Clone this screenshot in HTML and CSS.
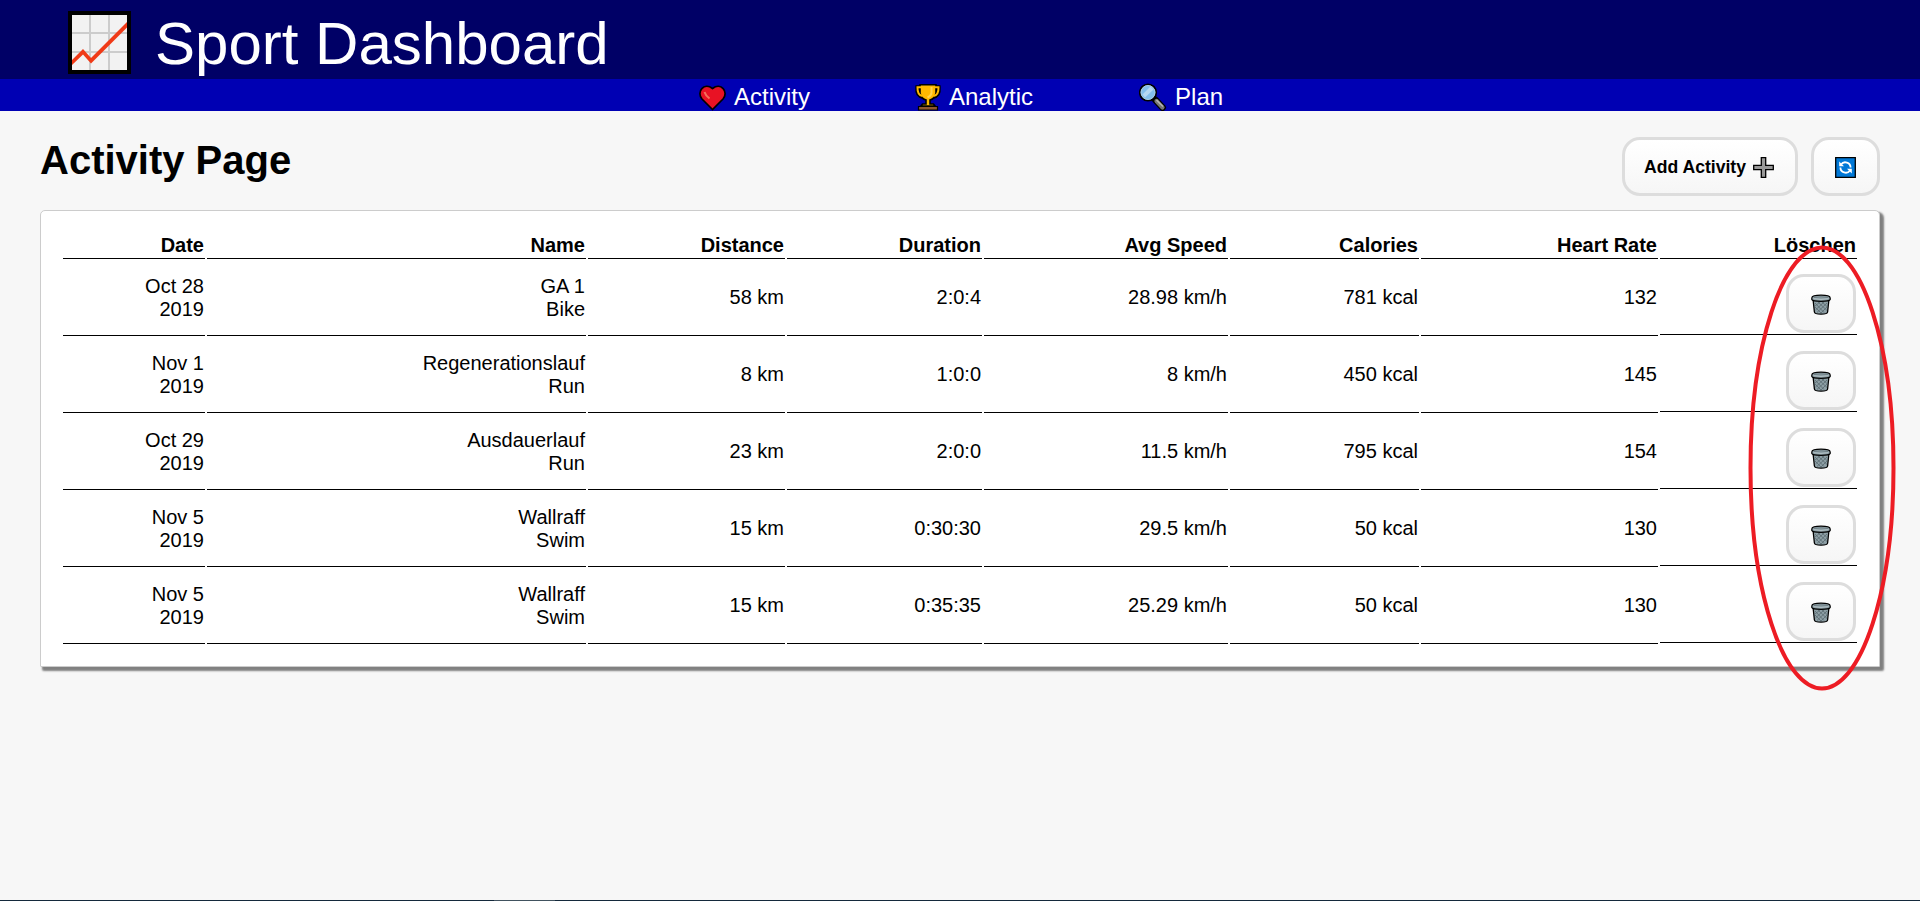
FILE: index.html
```html
<!DOCTYPE html>
<html lang="en">
<head>
<meta charset="utf-8">
<title>Sport Dashboard</title>
<link rel="stylesheet" href="styles.css">
</head>
<body>
<svg class="defs" width="0" height="0">
  <symbol id="trash" viewBox="0 0 20 21">
    <path d="M2 5 3.400 18Q3.600 20.200 10 20.200T16.600 18L18 5Z" fill="#8d9fa5" stroke="#000" stroke-width="1.300"/>
    <path d="M4 9 13 18.500M7 8 16 16.500M11 8 16.500 13M4 13 10 19M16 9 6 18.500M13 8 4.500 16M9 8 4 12M16 13 10 19" stroke="#596a70" stroke-width=".8" fill="none"/>
    <path d="M.800 4Q.800 1.200 10 1.200T19.200 4V5.500Q18.500 7.300 10 7.300T.800 5.500Z" fill="#8d9fa5" stroke="#000" stroke-width="1.200"/>
    <path d="M2.500 4.500Q10 6.500 17.500 4.500" stroke="#b3c1c6" stroke-width="1" fill="none"/>
    <path d="M3 3.600Q10 2 17 3.600" stroke="#66767c" stroke-width=".8" fill="none"/>
  </symbol>
</svg>
<header class="header">
  <svg class="logo" width="63" height="63" viewBox="0 0 63 63">
    <path d="M0 0H63V63H0Z"/>
    <path d="M4 4H59V59H4Z" fill="#f2f2f2"/>
    <path d="M22 4V59M41 4V59M4 22H59M4 41H59" stroke="#ccc" stroke-width="2"/>
    <path d="M4 49V54L15 43.500 23 52.500 59 16.500V11L23 47 15 38Z" fill="#f03a17"/>
  </svg>
  <span class="brand">Sport Dashboard</span>
</header>
<nav class="nav">
  <a class="nav-item"><svg width="28" height="28" viewBox="0 0 28 28">
    <path d="M13.500 26.500 3 16C-3 9 5-1 13.500 5.500 22-1 30 9 24 16Z" fill="#e81224" stroke="#000" stroke-width="1.700"/>
    <path d="M5.500 9Q6.500 12.500 10.500 15.500" stroke="#f4705a" stroke-width="2" fill="none"/>
  </svg><span>Activity</span></a>
  <a class="nav-item"><svg width="28" height="28" viewBox="0 0 28 28">
    <path d="M7 4.500H3.500C3 10 5 13 9 13.500M21 4.500H24.500C25 10 23 13 19 13.500" fill="none" stroke="#000" stroke-width="4.500"/>
    <path d="M6 1.800H22V10Q21 16 16 17V21H19.500L21 23H7L8.500 21H12V17Q7 16 6 10Z" fill="#ffb900" stroke="#000" stroke-width="1.600"/>
    <path d="M7 4.200H3.500C3.300 9.500 5 12.300 8.500 13M21 4.200H24.500C24.700 9.500 23 12.300 19.500 13" fill="none" stroke="#ffb900" stroke-width="2"/>
    <path d="M17.500 4V10Q17 13 13.500 14.500" fill="none" stroke="#ffd24d" stroke-width="2"/>
    <path d="M4.500 23.500H23.500V27H4.500Z" fill="#8e562e" stroke="#000" stroke-width="1.200"/>
  </svg><span>Analytic</span></a>
  <a class="nav-item"><svg width="28" height="28" viewBox="0 0 28 28">
    <path d="M16.500 17 23.500 24.500" stroke="#000" stroke-width="6.800" stroke-linecap="round"/>
    <path d="M13.500 14 18 18.500" stroke="#000" stroke-width="3"/>
    <path d="M17.500 18 23.500 24.500" stroke="#767676" stroke-width="4.200" stroke-linecap="round"/>
    <path d="M17.500 17 24 23.500" stroke="#b5b5b5" stroke-width="1.500"/>
    <circle cx="9" cy="9.500" r="8.200" fill="#83beec" stroke="#000" stroke-width="1.800"/>
    <circle cx="9" cy="9.500" r="7" fill="none" stroke="#a9cbe3" stroke-width="1"/>
    <path d="M3.500 11.500 11.500 3.500 14.500 6.500 6 14.500Z" fill="#b5d8f3"/>
  </svg><span>Plan</span></a>
</nav>
<main class="main">
  <div class="toolbar">
    <h1>Activity Page</h1>
    <div class="actions">
      <button class="btn btn-add"><span>Add Activity</span><svg width="21" height="21" viewBox="0 0 21 21"><path d="M8.300.700H12.700V8.300H20.300V12.700H12.700V20.300H8.300V12.700H.700V8.300H8.300Z" fill="#999" stroke="#000" stroke-width="1.300"/></svg></button>
      <button class="btn btn-refresh"><svg width="21" height="21" viewBox="0 0 21 21"><path d="M.700.700H20.300V20.300H.700Z" fill="#0078d7" stroke="#000" stroke-width="1.300"/><path d="M6 7.500A5.300 5.300 0 0 1 15.600 10.500M15 13.500A5.300 5.300 0 0 1 5.400 10.500" fill="none" stroke="#fff" stroke-width="1.800"/><path d="M4.200 4.500V9.300H9ZM16.800 16.500V11.700H12Z" fill="#fff"/></svg></button>
    </div>
  </div>
  <section class="card">
    <table>
      <colgroup><col class="c-date"><col class="c-name"><col class="c-dist"><col class="c-dur"><col class="c-speed"><col class="c-cal"><col class="c-heart"><col class="c-del"></colgroup>
      <thead><tr><th>Date</th><th>Name</th><th>Distance</th><th>Duration</th><th>Avg Speed</th><th>Calories</th><th>Heart Rate</th><th>Löschen</th></tr></thead>
      <tbody>
        <tr><td>Oct 28<br>2019</td><td>GA 1<br>Bike</td><td>58 km</td><td>2:0:4</td><td>28.98 km/h</td><td>781 kcal</td><td>132</td><td class="del"><div><button class="btn"><svg width="20" height="21"><use href="#trash"/></svg></button></div></td></tr>
        <tr><td>Nov 1<br>2019</td><td>Regenerationslauf<br>Run</td><td>8 km</td><td>1:0:0</td><td>8 km/h</td><td>450 kcal</td><td>145</td><td class="del"><div><button class="btn"><svg width="20" height="21"><use href="#trash"/></svg></button></div></td></tr>
        <tr><td>Oct 29<br>2019</td><td>Ausdauerlauf<br>Run</td><td>23 km</td><td>2:0:0</td><td>11.5 km/h</td><td>795 kcal</td><td>154</td><td class="del"><div><button class="btn"><svg width="20" height="21"><use href="#trash"/></svg></button></div></td></tr>
        <tr><td>Nov 5<br>2019</td><td>Wallraff<br>Swim</td><td>15 km</td><td>0:30:30</td><td>29.5 km/h</td><td>50 kcal</td><td>130</td><td class="del"><div><button class="btn"><svg width="20" height="21"><use href="#trash"/></svg></button></div></td></tr>
        <tr><td>Nov 5<br>2019</td><td>Wallraff<br>Swim</td><td>15 km</td><td>0:35:35</td><td>25.29 km/h</td><td>50 kcal</td><td>130</td><td class="del"><div><button class="btn"><svg width="20" height="21"><use href="#trash"/></svg></button></div></td></tr>
      </tbody>
    </table>
    <svg class="highlight" width="148" height="446" viewBox="0 0 148 446"><ellipse cx="74" cy="223" rx="71.500" ry="220.500" fill="none" stroke="#ed1c24" stroke-width="4"/></svg>
  </section>
</main>
<footer class="edge"></footer>
</body>
</html>
```
FILE: styles.css
```css
* { box-sizing: border-box; }
body {
  margin: 0;
  height: 901px;
  display: flex;
  flex-direction: column;
  overflow: hidden;
  background: #f7f7f7;
  color: #000;
  font: 20px/23px "Liberation Sans", Arial, sans-serif;
}
svg { display: block; flex: none; }
.defs { position: absolute; }
.header {
  height: 79px;
  flex: none;
  display: flex;
  align-items: flex-start;
  gap: 24px;
  padding: 11px 0 0 68px;
  background: #000066;
  color: #fff;
}
.brand { font-size: 60px; line-height: 68px; margin-top: -1px; }
.nav {
  height: 32px;
  flex: none;
  display: flex;
  gap: 105px;
  padding: 4px 0 0 699px;
  background: #0000b3;
  color: #fff;
  font-size: 24px;
  line-height: 27px;
}
.nav-item { display: flex; gap: 7px; }
.nav-item:nth-child(2) { margin-left: -1px; }
.nav-item:nth-child(3) { gap: 8px; margin-left: 1px; }
.main { flex: 1; padding: 26px 40px 0; }
.toolbar { display: flex; justify-content: space-between; height: 73px; }
h1 { margin: 0; font-size: 40px; line-height: 46px; }
.actions { display: flex; gap: 13px; }
.btn {
  display: flex;
  align-items: center;
  justify-content: center;
  width: 70px;
  height: 59px;
  padding: 2px 0 0;
  border: 3px solid #ddd;
  border-radius: 18px;
  background: linear-gradient(#fff, #f6f6f6);
  color: #000;
  font: bold 17.6px "Liberation Sans", Arial, sans-serif;
}
.btn-add { width: 176px; gap: 7px; padding-right: 2px; }
.btn-refresh { width: 69px; }
.card {
  position: relative;
  height: 457px;
  padding: 20px;
  border: 1px solid #ccc;
  border-radius: 5px 5px 1px 1px;
  background: #fff;
  box-shadow: 3px 3px 2px 1px #808080;
}
table { width: 1798px; table-layout: fixed; border-collapse: separate; border-spacing: 2px; }
th, td { padding: 1px; border-bottom: 1px solid #000; text-align: right; }
td { height: 75px; padding-bottom: 2px; }
.c-date { width: 142px; }
.c-name { width: 379px; }
.c-dist { width: 197px; }
.c-dur { width: 195px; }
.c-speed { width: 244px; }
.c-cal { width: 189px; }
.c-heart { width: 237px; }
.c-del { width: 197px; }
td.del { padding: 0; border: 0; vertical-align: top; }
.del div {
  display: flex;
  justify-content: flex-end;
  height: 74px;
  padding: 13px 1px 0 0;
  border-bottom: 1px solid #000;
}
.highlight { position: absolute; left: 1707px; top: 34px; }
.edge {
  height: 1px;
  flex: none;
  background: linear-gradient(90deg, #14293b 494px, #41525f 494px 555px, #14293b 555px);
}
```
